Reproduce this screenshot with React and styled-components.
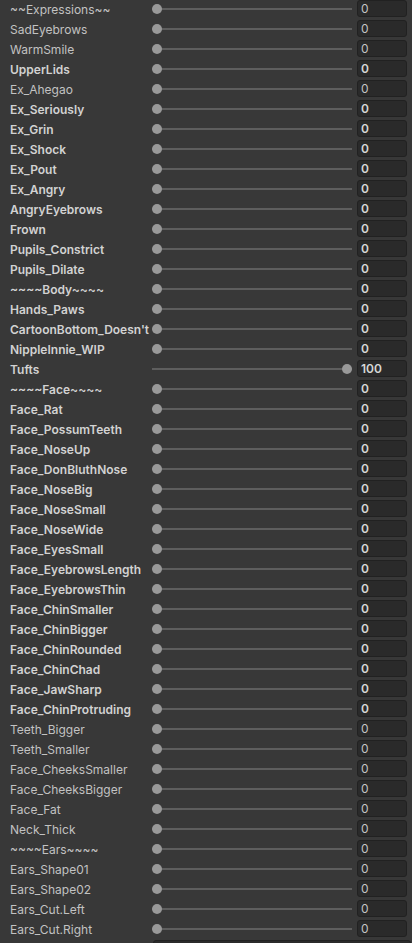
import React from "react";
import styled, { createGlobalStyle } from "styled-components";

const Global = createGlobalStyle`
  html, body { margin: 0; padding: 0; background: #383838; overflow: hidden; }
  body { width: 412px; height: 943px; font-family: Inter, "Noto Sans", sans-serif; }
`;

const List = styled.div`
  display: flex;
  flex-direction: column;
  width: 412px;
  height: 943px;
  overflow: hidden;
  background: #383838;
`;

const Row = styled.div`
  display: grid;
  grid-template-columns: 142px 200px 55px;
  align-items: start;
  height: 20px;
  flex: 0 0 20px;
  padding-left: 10px;
`;

const Label = styled.div`
  font-size: 12px;
  line-height: 18px;
  padding-top: 1px;
  color: ${(p) => (p.$bold ? "#d2d2d2" : "#c2c2c2")};
  font-weight: ${(p) => (p.$bold ? 600 : 400)};
  white-space: nowrap;
  overflow: visible;
`;

const Slider = styled.div`
  position: relative;
  height: 18px;
`;

const Track = styled.div`
  position: absolute;
  left: 0;
  right: 0;
  top: 8px;
  height: 2px;
  background: #5e5e5e;
`;

const Thumb = styled.div`
  position: absolute;
  top: 4px;
  width: 10px;
  height: 10px;
  border-radius: 50%;
  background: #999999;
`;

const Field = styled.div`
  box-sizing: border-box;
  margin-left: 5px;
  height: 17px;
  border: 1px solid #212121;
  border-radius: 3px;
  background: #2a2a2a;
  padding-left: 3px;
  font-size: 12px;
  line-height: 16px;
  color: ${(p) => (p.$bold ? "#d6d6d6" : "#c4c4c4")};
  font-weight: ${(p) => (p.$bold ? 600 : 400)};
`;

const PartialRow = styled.div`
  display: flex;
  padding-left: 153px;
  padding-right: 1px;
  height: 20px;
  flex: 0 0 20px;
`;

const PartialBox = styled.div`
  flex: 1;
  border: 1px solid #212121;
  border-radius: 3px;
  background: #2a2a2a;
`;

const rows = [
  ["~~Expressions~~", 0],
  ["SadEyebrows", 0],
  ["WarmSmile", 0],
  ["UpperLids", 1],
  ["Ex_Ahegao", 0],
  ["Ex_Seriously", 1],
  ["Ex_Grin", 1],
  ["Ex_Shock", 1],
  ["Ex_Pout", 1],
  ["Ex_Angry", 1],
  ["AngryEyebrows", 1],
  ["Frown", 1],
  ["Pupils_Constrict", 1],
  ["Pupils_Dilate", 1],
  ["~~~~Body~~~~", 1],
  ["Hands_Paws", 1],
  ["CartoonBottom_Doesn't", 1],
  ["NippleInnie_WIP", 1],
  ["Tufts", 1, 100],
  ["~~~~Face~~~~", 1],
  ["Face_Rat", 1],
  ["Face_PossumTeeth", 1],
  ["Face_NoseUp", 1],
  ["Face_DonBluthNose", 1],
  ["Face_NoseBig", 1],
  ["Face_NoseSmall", 1],
  ["Face_NoseWide", 1],
  ["Face_EyesSmall", 1],
  ["Face_EyebrowsLength", 1],
  ["Face_EyebrowsThin", 1],
  ["Face_ChinSmaller", 1],
  ["Face_ChinBigger", 1],
  ["Face_ChinRounded", 1],
  ["Face_ChinChad", 1],
  ["Face_JawSharp", 1],
  ["Face_ChinProtruding", 1],
  ["Teeth_Bigger", 0],
  ["Teeth_Smaller", 0],
  ["Face_CheeksSmaller", 0],
  ["Face_CheeksBigger", 0],
  ["Face_Fat", 0],
  ["Neck_Thick", 0],
  ["~~~~Ears~~~~", 0],
  ["Ears_Shape01", 0],
  ["Ears_Shape02", 0],
  ["Ears_Cut.Left", 0],
  ["Ears_Cut.Right", 0],
];

export default function App() {
  return (
    <>
      <Global />
      <List>
        {rows.map(([name, bold, value = 0]) => (
          <Row key={name}>
            <Label $bold={!!bold}>{name}</Label>
            <Slider>
              <Track />
              <Thumb style={{ left: `${(value / 100) * 190}px` }} />
            </Slider>
            <Field $bold={!!bold}>{value}</Field>
          </Row>
        ))}
        <PartialRow>
          <PartialBox />
        </PartialRow>
      </List>
    </>
  );
}
